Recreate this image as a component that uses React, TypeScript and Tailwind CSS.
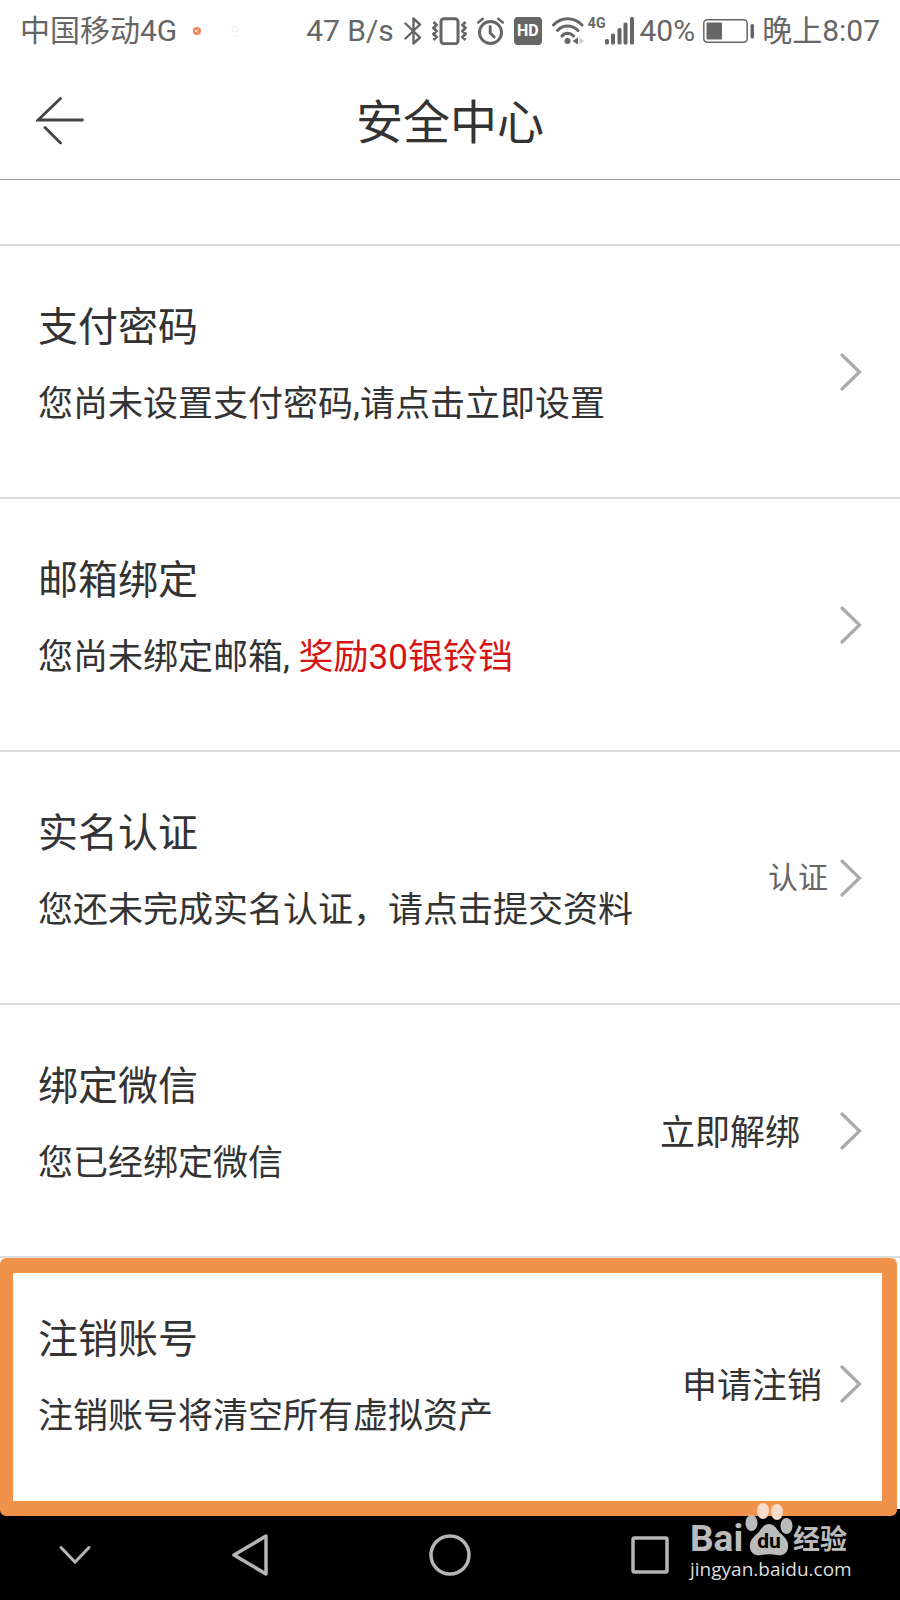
import React from 'react';

interface SecurityItem {
  id: string;
  title: string;
  description: string;
  reward?: string;
  action?: string;
  actionClass?: string;
  highlighted?: boolean;
}

const items: SecurityItem[] = [
  { id: 'pay', title: '支付密码', description: '您尚未设置支付密码,请点击立即设置' },
  { id: 'email', title: '邮箱绑定', description: '您尚未绑定邮箱, ', reward: '奖励30银铃铛' },
  {
    id: 'realname',
    title: '实名认证',
    description: '您还未完成实名认证，请点击提交资料',
    action: '认证',
    actionClass: 'mr-3 text-[30px] text-[#666]'
  },
  {
    id: 'wechat',
    title: '绑定微信',
    description: '您已经绑定微信',
    action: '立即解绑',
    actionClass: 'mr-10 pt-2 text-[35px]'
  },
  {
    id: 'cancel',
    title: '注销账号',
    description: '注销账号将清空所有虚拟资产',
    action: '申请注销',
    actionClass: 'mr-[18px] pt-2 text-[35px]',
    highlighted: true
  }
];

function BluetoothIcon() {
  return (
    <svg width="18" height="28" viewBox="0 0 18 28" fill="none" stroke="currentColor" strokeWidth="2.4" strokeLinejoin="round" strokeLinecap="round">
      <path d="M1.5 6.5 16 20.5 9.5 26.5V1.5L16 7.5 1.5 21.5" />
    </svg>
  );
}

function VibrateIcon() {
  return (
    <svg width="35" height="28" viewBox="0 0 35 28" fill="none" stroke="currentColor">
      <rect x="9" y="1.800" width="17" height="25" rx="3" strokeWidth="3" />
      <path d="M1.5 5 4.500 8 1.500 11 4.500 14 1.500 17 4.500 20 1.500 23M33.500 5 30.500 8 33.500 11 30.500 14 33.500 17 30.500 20 33.500 23" strokeWidth="2.800" />
    </svg>
  );
}

function AlarmIcon() {
  return (
    <svg width="27" height="28" viewBox="0 0 27 28" fill="none" stroke="currentColor" strokeWidth="3" strokeLinecap="round">
      <circle cx="13.5" cy="15.5" r="11" />
      <path d="M13.2 9.5V16l4 4" />
      <path d="M1.2 5.5 5.8 1.8M25.8 5.5 21.2 1.8" strokeWidth="2.4" />
    </svg>
  );
}

function WifiIcon() {
  return (
    <svg width="32" height="28" viewBox="1 0 32 28" fill="none" stroke="currentColor" strokeWidth="3" strokeLinecap="round">
      <path d="M2.500 8C10 -.2 23 -.2 31 8M6.500 13.5C12 7.5 21 7.5 27 13.5M11 19C14 15.3 19 15.3 22.5 19" />
      <circle cx="16.5" cy="24" r="3" fill="currentColor" stroke="none" />
      <path d="M27 20.5V27.5L21.5 24Z" fill="currentColor" stroke="none" />
      <path d="M28.5 20.5V27.5L33 24Z" fill="#ccc" stroke="none" />
    </svg>
  );
}

function SignalIcon() {
  return (
    <svg width="29" height="28" viewBox="0 0 29 28" fill="currentColor">
      <rect x="0" y="22" width="4" height="5.5" rx="1.5" />
      <rect x="6" y="16.5" width="4" height="11" rx="1.5" />
      <rect x="12.5" y="11" width="4" height="16.5" rx="1.5" />
      <rect x="18.5" y="5.5" width="4" height="22" rx="1.5" />
      <rect x="25" y="0" width="4" height="27.5" rx="1.5" />
    </svg>
  );
}

function BatteryIcon() {
  return (
    <svg width="51" height="24" viewBox="0 0 51 24">
      <rect x=".8" y=".8" width="43.4" height="22.4" rx="3.5" fill="none" stroke="currentColor" strokeWidth="1.5" />
      <rect x="3.5" y="3.5" width="15.5" height="17" rx="1" fill="currentColor" />
      <rect x="47.5" y="5" width="3.5" height="14.5" rx="1.5" fill="currentColor" />
    </svg>
  );
}

function StatusBar() {
  return (
    <div className="flex h-[62px] items-center justify-between px-5 text-[30px] leading-9 text-[#666]">
      <div className="flex items-center">
        <span>中国移动4G</span>
        <svg className="ml-4" width="8" height="8" viewBox="0 0 8 8">
          <circle cx="4" cy="4" r="4" fill="#e8835a" />
          <path d="M5.5 2 3 4 5.5 6M2.500 3V5" stroke="#fff" strokeWidth=".8" fill="none" />
        </svg>
        <svg className="ml-[30px]" width="8" height="12" viewBox="0 0 8 12" fill="none" stroke="#f3f1ee">
          <circle cx="4" cy="4" r="3" />
          <path d="M2 10.5H6" />
        </svg>
      </div>
      <div className="flex items-center">
        <span>47 B/s</span>
        <div className="ml-[10px] mr-1 flex items-center gap-[10px]">
          <BluetoothIcon />
          <VibrateIcon />
          <AlarmIcon />
          <span className="flex h-7 w-7 items-center justify-center rounded-sm bg-[#666] text-base font-bold text-white">HD</span>
          <WifiIcon />
        </div>
        <span className="h-7 text-sm font-bold leading-3">4G</span>
        <SignalIcon />
        <span className="ml-[5px]">40%</span>
        <span className="ml-2 mr-2">
          <BatteryIcon />
        </span>
        <span>晚上8:07</span>
      </div>
    </div>
  );
}

function Header() {
  return (
    <header className="grid h-[118px] grid-cols-[1fr_auto_1fr] items-center border-b border-[#999] px-9">
      <button type="button" aria-label="返回" className="justify-self-start">
        <svg width="48" height="48" viewBox="0 0 48 48" fill="none" stroke="#444" strokeWidth="2.8" strokeLinecap="round">
          <path d="M46.5 23H2L24.5 1.500M9 30.500 24.5 46" />
        </svg>
      </button>
      <h1 className="pt-1 text-[47px] leading-[56px]">安全中心</h1>
    </header>
  );
}

function SecurityRow({ item }: { item: SecurityItem }) {
  return (
    <li className={item.highlighted ? 'relative' : 'border-b-2 border-[#dcdcdc]'}>
      <button type="button" className="flex w-full items-center px-[38px] py-[58px] text-left">
        <span className="flex flex-1 flex-col gap-[31px] pb-3">
          <span className="text-[40px] leading-[48px]">{item.title}</span>
          <span className="text-[35px] leading-[44px]">
            {item.description}
            {item.reward && <span className="text-[#d61313]">{item.reward}</span>}
          </span>
        </span>
        {item.action && <span className={item.actionClass}>{item.action}</span>}
        <svg width="22" height="38" viewBox="0 0 22 38" fill="none" stroke="#aaa" strokeWidth="3.2" strokeLinecap="round">
          <path d="M2 2 19.5 19 2 36" />
        </svg>
      </button>
      {item.highlighted && (
        <div className="pointer-events-none absolute -bottom-[7px] left-0 right-[3px] top-0 z-10 rounded-md border-[15px] border-l-[13px] border-[#f0924a]" />
      )}
    </li>
  );
}

function Watermark() {
  return (
    <div className="absolute right-12 top-[-6px] z-20 w-[162px] text-[#bbb]">
      <div className="flex h-[54px] items-end">
        <span className="w-[55px] text-[37px] font-bold leading-9">Bai</span>
        <span className="relative flex h-[54px] w-12 justify-center">
          <svg className="absolute inset-0" width="48" height="54" viewBox="0 0 48 54" fill="currentColor">
            <ellipse cx="6.5" cy="20" rx="6" ry="8" />
            <ellipse cx="18" cy="8" rx="6" ry="8" fill="#f8dcc8" />
            <ellipse cx="32" cy="9" rx="6" ry="8" fill="#f8dcc8" />
            <ellipse cx="41.500" cy="23" rx="6" ry="8" />
            <path d="M24 21c5 0 8 5 11 9 5 4 9 8 8 15-1 6-6 8-11 7-5-1-11-1-16 0-5 1-10-1-11-7-1-7 3-11 8-15 3-4 6-9 11-9Z" />
          </svg>
          <span className="relative mt-[26px] text-[21px] font-bold leading-6 text-black">du</span>
        </span>
        <span className="text-[27px] font-bold leading-[34px]">经验</span>
      </div>
      <div className="font-['Open_Sans'] text-[19px] leading-6 text-[#ddd]">jingyan.baidu.com</div>
    </div>
  );
}

function NavBar() {
  return (
    <nav className="relative grid h-[91px] grid-cols-[3fr_4fr_4fr_4fr_3fr] place-items-center bg-black text-[#b5b5b5]">
      <button type="button" aria-label="收起">
        <svg width="32" height="20" viewBox="0 0 32 20" fill="none" stroke="currentColor" strokeWidth="3" strokeLinecap="round">
          <path d="M2 2.5 16 17 30 2.5" />
        </svg>
      </button>
      <button type="button" aria-label="后退">
        <svg width="36" height="42" viewBox="0 0 36 42" fill="none" stroke="currentColor" strokeWidth="3.5" strokeLinejoin="round">
          <path d="M34 2V40L2 21Z" />
        </svg>
      </button>
      <button type="button" aria-label="主页">
        <svg width="42" height="42" viewBox="0 0 42 42" fill="none" stroke="currentColor" strokeWidth="3.5">
          <circle cx="21" cy="21" r="19" />
        </svg>
      </button>
      <button type="button" aria-label="最近任务">
        <svg width="38" height="38" viewBox="0 0 38 38" fill="none" stroke="currentColor" strokeWidth="3.5">
          <rect x="2" y="2" width="34" height="34" rx="1.5" />
        </svg>
      </button>
      <Watermark />
    </nav>
  );
}

export default function App() {
  return (
    <div lang="zh-CN" className="min-h-screen bg-[#fefefe] font-[Roboto,'Noto_Sans_CJK_SC',sans-serif] text-[#333]">
      <StatusBar />
      <Header />
      <main>
        <div className="h-[66px] border-b-2 border-[#dcdcdc]" />
        <ul>
          {items.map((item) => (
            <SecurityRow key={item.id} item={item} />
          ))}
        </ul>
      </main>
      <NavBar />
    </div>
  );
}
